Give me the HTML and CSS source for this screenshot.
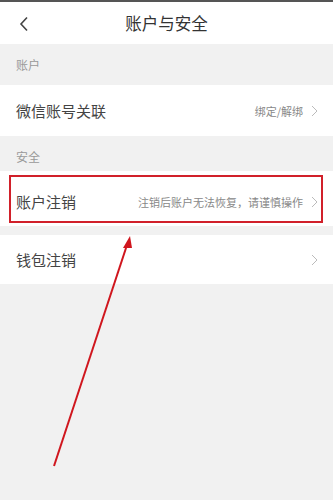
FILE: index.html
```html
<!DOCTYPE html>
<html lang="zh">
<head>
<meta charset="utf-8">
<link rel="stylesheet" href="styles.css">
</head>
<body>
<div class="page">
  <div class="topline"></div>
  <header class="header">
    <svg class="back" width="10" height="16" viewBox="0 0 10 16"><path d="M8 1.5 L2 8 L8 14.5" fill="none" stroke="#444" stroke-width="1.6"/></svg>
    <h1 class="title">账户与安全</h1>
  </header>
  <div class="section">账户</div>
  <div class="row row-wechat">
    <span class="label">微信账号关联</span>
    <span class="right"><span class="hint">绑定/解绑</span><svg class="chev" width="7" height="12" viewBox="0 0 7 12"><path d="M1 1 L6 6 L1 11" fill="none" stroke="#bbb" stroke-width="1"/></svg></span>
  </div>
  <div class="section">安全</div>
  <div class="row row-account">
    <span class="label">账户注销</span>
    <span class="right"><span class="hint">注销后账户无法恢复，请谨慎操作</span><svg class="chev" width="7" height="12" viewBox="0 0 7 12"><path d="M1 1 L6 6 L1 11" fill="none" stroke="#bbb" stroke-width="1"/></svg></span>
    <div class="highlight"></div>
  </div>
  <div class="gap"></div>
  <div class="row row-wallet">
    <span class="label">钱包注销</span>
    <span class="right"><svg class="chev" width="7" height="12" viewBox="0 0 7 12"><path d="M1 1 L6 6 L1 11" fill="none" stroke="#bbb" stroke-width="1"/></svg></span>
  </div>
  <svg class="arrow" width="333" height="500" viewBox="0 0 333 500">
    <line x1="54" y1="466" x2="127" y2="245" stroke="#d0161e" stroke-width="2"/>
    <polygon points="130,236 123,248 132,248" fill="#d0161e"/>
  </svg>
</div>
</body>
</html>
```
FILE: styles.css
```css
* { box-sizing: border-box; margin: 0; padding: 0; }
html, body { width: 333px; height: 500px; overflow: hidden; }
body {
  background: #f1f1f1;
  font-family: "Noto Sans CJK SC", "Noto Sans", sans-serif;
  color: #333;
}
.page { position: relative; width: 333px; height: 500px; }
.topline { height: 2px; background: #555; }
.header {
  position: relative;
  height: 42px;
  background: #fff;
  display: flex;
  align-items: center;
  justify-content: center;
}
.back { position: absolute; left: 19px; top: 14px; }
.title { font-size: 16.5px; font-weight: normal; color: #333; }
.section {
  height: 41px;
  padding-left: 16px;
  display: flex;
  align-items: center;
  font-size: 12px;
  color: #999;
}
.row {
  position: relative;
  background: #fff;
  display: flex;
  align-items: center;
  justify-content: space-between;
  padding: 0 15px 0 16px;
}
.row-wechat { height: 51px; }
.row-account { height: 55px; margin-top: -6px; }
.row-wallet { height: 49px; }
.gap { height: 9px; }
.label { font-size: 15px; color: #444; }
.right { display: flex; align-items: center; gap: 8px; }
.hint { font-size: 11px; color: #888; }
.chev { display: block; }
.row-account .label, .row-account .right { margin-top: 6px; }
.highlight {
  position: absolute;
  left: 9px; right: 10px; top: 4px; bottom: 3px;
  border: 2px solid #d1202a;
}
.arrow { position: absolute; left: 0; top: 0; pointer-events: none; }
```
